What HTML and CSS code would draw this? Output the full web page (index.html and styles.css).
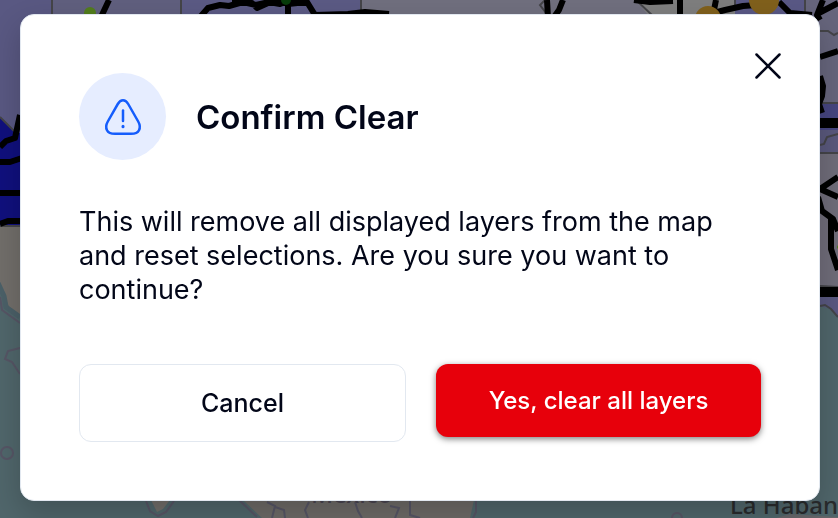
FILE: index.html
```
<!DOCTYPE html>
<html lang="en">
<head>
    <meta charset="UTF-8">
    <meta name="viewport" content="width=device-width, initial-scale=1.0">
    <title>Confirm Clear</title>
    <link rel="stylesheet" href="styles.css">
</head>
<body>
    <svg class="map" viewBox="0 0 838 518" preserveAspectRatio="xMidYMid slice" aria-hidden="true">
        <!-- sea -->
        <rect width="838" height="518" fill="#50666b"/>

        <!-- states -->
        <path fill="#595882" d="M0 0H52V226H0z"/>
        <path fill="#605f7e" d="M52 0H181V226H52z"/>
        <path fill="#5b5a84" d="M181 0H361V226H181z"/>
        <path fill="#706f7e" d="M361 0H838V306H361z"/>
        <path fill="#7e7e7e" d="M636 0H735V30H660z"/>
        <path fill="#595885" d="M735 0H805V30H735z"/>
        <path fill="#66657c" d="M805 0H838V103H805z"/>
        <path fill="#46457f" d="M820 103H838V130H820z"/>
        <path fill="#59587c" d="M820 130H838V153H820z"/>
        <path fill="#6f6c79" d="M820 154H838V290H820z"/>
        <path fill="#595880" d="M820 296H838V318L831 309L820 306z"/>
        <path fill="#10107d" d="M0 117L14 131L40 140V226H0z"/>

        <!-- coasts -->
        <path fill="#716e6a" d="M0 227H40V330L19 316L9 307L5 296L0 285z"/>
        <path class="shallow" d="M-2 283L4 296L6 307L20 317"/>
        <path class="coast" d="M0 297L2 310L20 323M20 348L8 351L5 359L12 362L20 374M257 517L239 500M146 501L150 511L158 516L166 512L174 501"/>
        <circle class="coast" cx="7" cy="453" r="6"/>
        <path fill="#716e6a" d="M151 500H170L163 509L157 512z"/>
        <path fill="#6d6a67" d="M243 500H474L470 518H262z"/>
        <path class="coast" d="M476 500V512L473 518M267 502L275 506L272 518M275 507L284 510L285 518M309 502L305 510L308 518M355 502L358 511L362 518M390 506L399 508L395 518M410 501V515L420 518"/>
        <circle class="coast" cx="677" cy="518" r="5"/>
        <path fill="#66676a" d="M776 518L790 514L838 517V518z"/>

        <!-- state borders -->
        <path class="border" d="M52 0V20M181 0V20M361 0V20M545 0L540 5L546 13M636 0L653 16M735 0V8M805 0V14M0 117L14 131M0 226H20M820 31H828L834 35L838 33M820 103H838M820 145L824 144L827 137L838 134M820 153H838M820 286L838 287M820 306L825 305L831 309L838 317"/>

        <!-- transmission lines -->
        <g class="lines">
            <path d="M109 0L101 17M201 16L208 8L220 5L229 6L243 2L256 5L269 2L280 4L288 1M288 4L307 2L315 15L348 14L365 12L389 14M288 0V20M232 3H252L257 8L268 3H307M547 0L548 18M563 0L559 10L554 17"/>
            <path d="M634 0L650 2L673 1M680 0V18M716 0L713 15M695 18L725 10L743 6L770 4M779 2L790 13L812 15M823 0L817 15L820 20M817 14L838 3M820 57L838 51M820 76L823 86L822 96L819 104L822 113"/>
            <path d="M0 147L6 141L15 138L20 115M0 162L10 162L22 158M0 193H20M0 224L8 221H21M820 189L838 177M820 189L838 197M818 197L822 211L833 219L838 231M831 216L831 249L838 270"/>
            <path class="heavy" d="M818 123H838M818 292H838"/>
        </g>

        <!-- plants -->
        <circle cx="90" cy="13" r="6" fill="#527d1c"/>
        <circle cx="286" cy="0" r="5" fill="#083c0b"/>
        <circle cx="708" cy="19" r="13" fill="#80601c"/>
        <circle cx="764" cy="0" r="15" fill="#80601c"/>
        <circle cx="839" cy="247" r="2" fill="#527d1c"/>

        <text class="country" x="311" y="503">Mexico</text>
        <text class="city" x="730" y="514">La Haban</text>
    </svg>

    <main class="overlay">
        <div class="dialog" role="alertdialog" aria-labelledby="dialog-title" aria-describedby="dialog-text">
            <button class="close" type="button" aria-label="Close">
                <svg width="26" height="26" viewBox="0 0 26 26" fill="none" stroke="currentColor" stroke-width="2.5" stroke-linecap="round">
                    <path d="M1.5 1.5L24.5 24.5M24.5 1.5L1.5 24.5"/>
                </svg>
            </button>
            <div class="header">
                <div class="icon">
                    <svg width="44" height="44" viewBox="0 0 44 44" fill="none" stroke="currentColor" stroke-width="2.5" stroke-linecap="round" stroke-linejoin="round">
                        <path d="M22 5.3C19.8 5.3 18.3 6.5 16.8 9L6.800 26.500C4.800 30 4.800 32.800 6 35.200C7.500 38.300 10.500 38.800 14 38.800H30C33.500 38.800 36.500 38.300 38 35.200C39.200 32.800 39.200 30 37.200 26.500L27.200 9C25.700 6.500 24.200 5.300 22 5.300Z"/>
                        <path d="M22 15.500V26"/>
                        <path d="M22 31.300V31.800" stroke-width="3"/>
                    </svg>
                </div>
                <h1 id="dialog-title">Confirm Clear</h1>
            </div>
            <p class="message" id="dialog-text">This will remove all displayed layers from the map and reset selections. Are you sure you want to continue?</p>
            <div class="actions">
                <button class="btn cancel" type="button">Cancel</button>
                <button class="btn danger" type="button">Yes, clear all layers</button>
            </div>
        </div>
    </main>
</body>
</html>
```
FILE: styles.css
```
* {
    box-sizing: border-box;
}
body {
    margin: 0;
    font-family: Inter, "Liberation Sans", sans-serif;
    color: #020618;
    background-color: #50666b;
}

/* Map behind the dialog */
.map {
    position: fixed;
    inset: 0;
    width: 100%;
    height: 100%;
}
.border {
    fill: none;
    stroke: #444448;
    stroke-width: 2;
}
.coast {
    fill: none;
    stroke: #565565;
    stroke-width: 2;
}
.shallow {
    fill: none;
    stroke: #4b6068;
    stroke-width: 5;
}
.lines {
    fill: none;
    stroke: #000;
    stroke-width: 6;
    stroke-linejoin: round;
}
.heavy {
    stroke-width: 10;
}
.country,
.city {
    font-family: "Noto Sans", sans-serif;
    font-size: 24px;
    font-weight: 500;
    fill: #292b2d;
}
.country {
    fill: #494551;
}

/* Dialog */
.overlay {
    position: relative;
    min-height: 100vh;
    padding: 14px 18px 17px 20px;
}
.dialog {
    position: relative;
    max-width: 800px;
    margin: 0 auto;
    padding: 58px;
    background-color: #fff;
    border: 1px solid #e2e8f0;
    border-radius: 14px;
    box-shadow: 0 12px 30px rgba(0, 0, 0, 0.2);
}
.close {
    position: absolute;
    top: 38px;
    right: 38px;
    padding: 0;
    border: 0;
    background: none;
    color: inherit;
    cursor: pointer;
}
.close svg,
.icon svg {
    display: block;
}
.header {
    display: flex;
    align-items: center;
    gap: 30px;
    margin-bottom: 45px;
}
.icon {
    display: flex;
    align-items: center;
    justify-content: center;
    width: 87px;
    height: 87px;
    border-radius: 50%;
    background-color: #e6edff;
    color: #155dfc;
}
h1 {
    margin: 0;
    font-size: 33px;
    font-weight: 600;
    line-height: 44px;
}
.message {
    margin: 0 0 57px;
    font-size: 27px;
    line-height: 34px;
}
.actions {
    display: flex;
    align-items: flex-start;
    gap: 30px;
}
.btn {
    flex: 1;
    padding: 20px;
    border: 0;
    border-radius: 12px;
    font-family: inherit;
    cursor: pointer;
}
.cancel {
    border: 1px solid #e2e8f0;
    background-color: #fff;
    color: inherit;
    font-size: 25px;
    font-weight: 500;
    line-height: 36px;
}
.danger {
    background-color: #e7000b;
    color: #fff;
    font-size: 24px;
    font-weight: 500;
    line-height: 33px;
    box-shadow: 0 2px 6px rgba(0, 0, 0, 0.5);
}
```
